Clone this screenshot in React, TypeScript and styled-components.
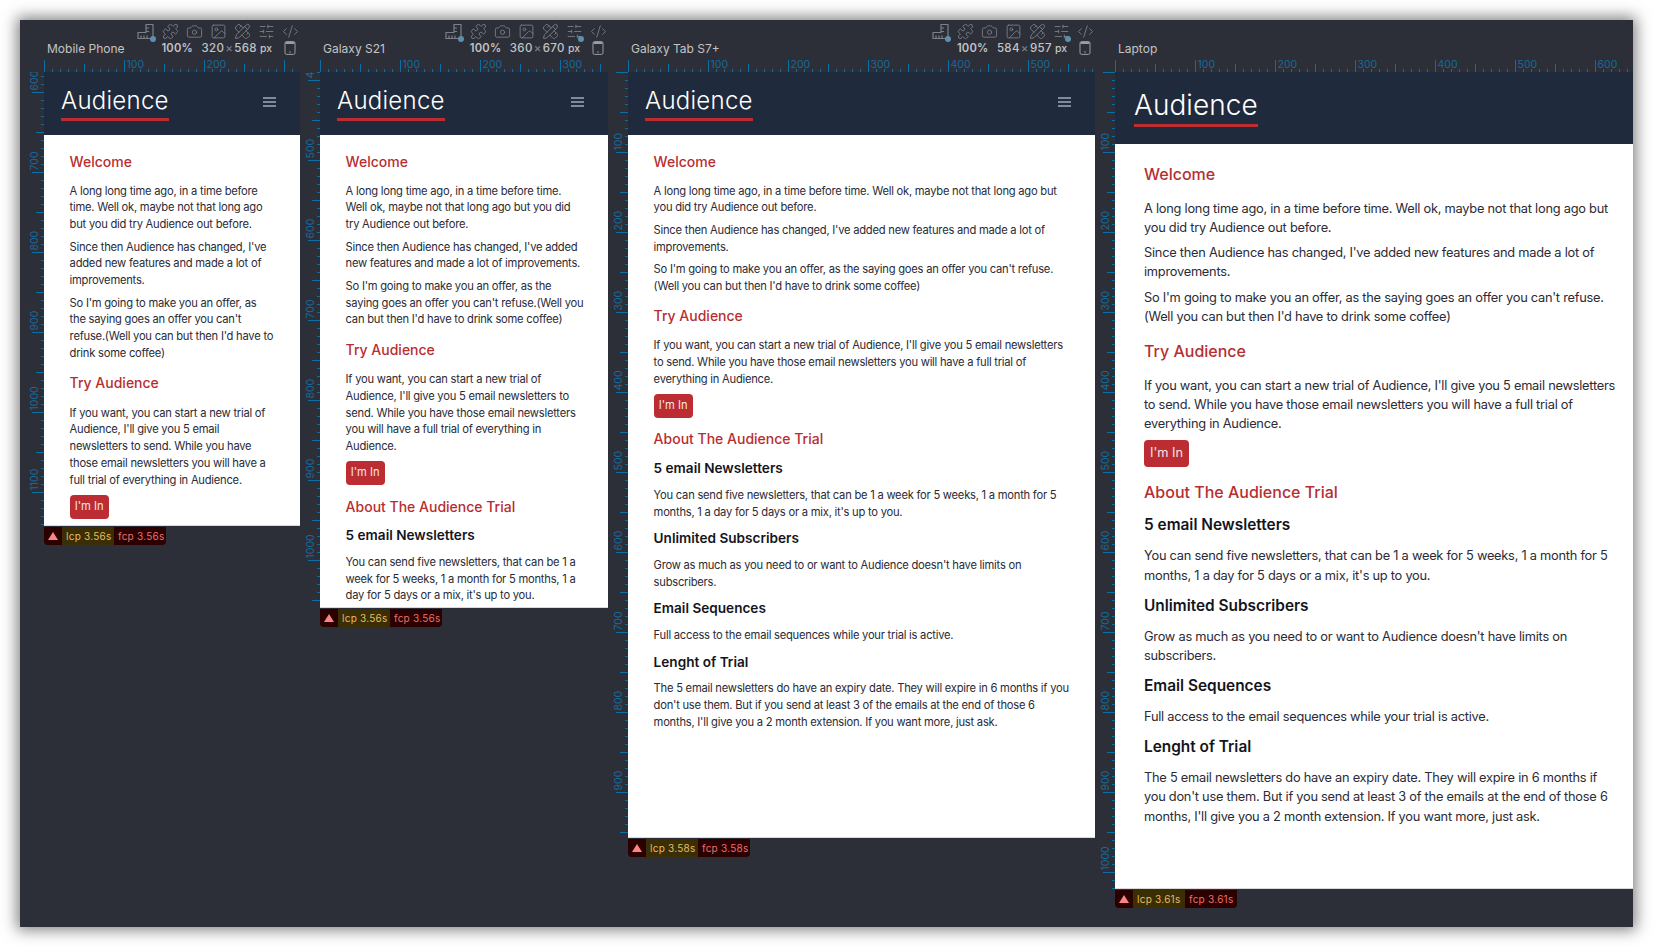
import React from "react";
import styled, { createGlobalStyle } from "styled-components";
import { Puzzle, Camera, Image as ImageIcon, PencilRuler, SlidersHorizontal, CodeXml } from "lucide-react";

const Global = createGlobalStyle`
  html, body { margin: 0; padding: 0; background: #fff; }
  body { font-family: Inter, "Liberation Sans", sans-serif; }
  * { box-sizing: border-box; }
`;

const Page = styled.div`
  padding: 20px;
  width: 1653px;
  height: 947px;
`;
const Win = styled.div`
  width: 1613px;
  height: 907px;
  background: #2c2f38;
  box-shadow: 0 0 14px 3px rgba(0, 0, 0, 0.5);
  display: flex;
  align-items: flex-start;
  overflow: hidden;
`;
const Device = styled.section<{ $gutter: number; $width?: number }>`
  display: grid;
  grid-template-columns: ${(p) => p.$gutter}px ${(p) => (p.$width ? `${p.$width}px` : "1fr")};
  grid-template-rows: 52px auto auto;
  flex: ${(p) => (p.$width ? "none" : "1 1 0")};
  min-width: 0;
`;
const Corner = styled.div``;
const Top = styled.header`
  display: flex;
  flex-direction: column;
  min-width: 0;
  overflow: hidden;
`;
const IconRow = styled.div`
  height: 20px;
  display: flex;
  justify-content: flex-end;
  align-items: center;
  gap: 4px;
  padding-top: 3px;
`;
const Slot = styled.span`
  position: relative;
  width: 20px;
  height: 18px;
  display: flex;
  align-items: center;
  justify-content: center;
  color: #7d8087;
`;
const Dot = styled.i`
  position: absolute;
  right: 0;
  bottom: -1px;
  width: 6px;
  height: 6px;
  border-radius: 50%;
  background: #5d90ad;
`;
const InfoRow = styled.div`
  height: 16px;
  display: flex;
  align-items: center;
  font-size: 12px;
  color: #c3c4c7;
`;
const Label = styled.span`
  margin-left: 3px;
  margin-right: auto;
  white-space: nowrap;
`;
const Zoom = styled.span`
  font-size: 11.2px;
  font-weight: 600;
  width: 40px;
  letter-spacing: 0.2px;
  white-space: nowrap;
`;
const Dims = styled.span`
  font-size: 11.5px;
  font-weight: 500;
  letter-spacing: 0.35px;
  white-space: nowrap;
`;
const Times = styled.span`
  color: #7c7f86;
  margin: 0 1px;
`;
const Px = styled.span`
  font-size: 10.5px;
  font-weight: 500;
  margin-left: 3px;
  margin-right: 12px;
`;
const PhoneSlot = styled.span`
  display: flex;
  margin-right: 4px;
  color: #9a9ca2;
`;
const RulerH = styled.svg`
  display: block;
  flex: none;
`;
const RulerV = styled.svg`
  display: block;
  justify-self: end;
`;
const Viewport = styled.div<{ $height: number }>`
  height: ${(p) => p.$height}px;
  background: #fff;
  overflow: hidden;
  border-bottom: 1px solid #d9d9d9;
`;
const SiteHeader = styled.div<{ $wide?: boolean }>`
  height: ${(p) => (p.$wide ? 72 : 63)}px;
  background: #1f2a3c;
  display: flex;
  align-items: center;
  justify-content: space-between;
  padding: 0 24px 0 ${(p) => (p.$wide ? 19 : 17)}px;
`;
const Logo = styled.div<{ $wide?: boolean }>`
  color: #fff;
  font-size: ${(p) => (p.$wide ? 28 : 24)}px;
  line-height: ${(p) => (p.$wide ? 32 : 28)}px;
  font-weight: 300;
  padding-bottom: 3px;
  border-bottom: 3px solid #bb2d2e;
  letter-spacing: ${(p) => (p.$wide ? 0.05 : 0.25)}px;
`;
const Burger = styled.div`
  width: 13px;
  height: 10px;
  margin-top: -3px;
  border-top: 2px solid #7f8b9c;
  border-bottom: 2px solid #7f8b9c;
  display: flex;
  align-items: center;
  &::before {
    content: "";
    display: block;
    width: 100%;
    height: 2px;
    background: #7f8b9c;
  }
`;
const Article = styled.div<{ $wide?: boolean }>`
  padding: ${(p) => (p.$wide ? "20px 20px 0 29px" : "17.5px 20px 0 25.6px")};
  color: #2a2b36;
  font-size: ${(p) => (p.$wide ? 12.8 : 11.2)}px;
  line-height: 1.5;
  letter-spacing: -0.24px;
`;
const H3 = styled.h3<{ $wide?: boolean }>`
  margin: ${(p) => (p.$wide ? "15px 0 14.5px" : "12.6px 0 13.2px")};
  color: #b72e30;
  font-size: ${(p) => (p.$wide ? 16 : 14)}px;
  line-height: ${(p) => (p.$wide ? 20 : 17)}px;
  font-weight: 500;
  letter-spacing: 0;
  &:first-child { margin-top: 0; }
`;
const H4 = styled.h4<{ $wide?: boolean }>`
  margin: ${(p) => (p.$wide ? "11px 0 12px" : "9.9px 0 9.6px")};
  color: #14151c;
  font-size: ${(p) => (p.$wide ? 15.4 : 13.6)}px;
  line-height: ${(p) => (p.$wide ? 19 : 17)}px;
  font-weight: 600;
  letter-spacing: 0;
  h3 + & { margin-top: ${(p) => (p.$wide ? -1 : -0.5)}px; }
`;
const P = styled.p<{ $wide?: boolean }>`
  margin: 0 0 ${(p) => (p.$wide ? 6.4 : 5.6)}px;
`;
const Line = styled.span`
  display: block;
  white-space: nowrap;
`;
const Btn = styled.button<{ $wide?: boolean }>`
  display: block;
  margin: 6px 0 0;
  padding: 0;
  width: ${(p) => (p.$wide ? 45 : 39)}px;
  height: ${(p) => (p.$wide ? 27 : 24)}px;
  border: 0;
  border-radius: 4px;
  background: #bb2d32;
  color: #f7e4e4;
  font: inherit;
  letter-spacing: 0;
  line-height: 1;
`;
const Status = styled.div`
  display: inline-flex;
  height: 18px;
  margin-top: 0.5px;
  font-size: 10px;
  line-height: 18px;
  letter-spacing: 0.25px;
  border-radius: 0 0 4px 4px;
  overflow: hidden;
  justify-self: start;
`;
const Warn = styled.span`
  width: 18px;
  background: #2a0000;
  display: flex;
  align-items: center;
  justify-content: center;
  color: #f98686;
`;
const Metric = styled.span<{ $ok?: boolean }>`
  padding: 0 4px;
  width: 52px;
  white-space: nowrap;
  background: ${(p) => (p.$ok ? "#3b2e05" : "#2a0000")};
  color: ${(p) => (p.$ok ? "#e5bd63" : "#ee6f6f")};
`;

const TICK = "#0b6fa6";
const TEXT = "#156a9b";
const STEP = 0.8;
const RULER_H = 16;

function HRuler({ width }: { width: number }) {
  const items: React.ReactNode[] = [];
  for (let v = 0; v * STEP <= width; v += 10) {
    const x = v * STEP + 0.5;
    const h = v % 100 === 0 ? 12 : v % 50 === 0 ? 8 : 3;
    items.push(<line key={v} x1={x} x2={x} y1={RULER_H - h} y2={RULER_H} stroke={TICK} />);
    if (v % 100 === 0 && v > 0 && x + 24 < width)
      items.push(
        <text key={`t${v}`} x={x + 2} y={12} fontSize={10.5} fill={TEXT} fontFamily="Inter, sans-serif">
          {v}
        </text>
      );
  }
  return (
    <RulerH width={width} height={RULER_H} viewBox={`0 0 ${width} ${RULER_H}`}>
      {items}
    </RulerH>
  );
}

function VRuler({ height, start, gutter }: { height: number; start: number; gutter: number }) {
  const items: React.ReactNode[] = [];
  for (let v = Math.ceil(start / 10) * 10; (v - start) * STEP <= height; v += 10) {
    const y = (v - start) * STEP + 0.5;
    const w = v % 100 === 0 ? 12 : v % 50 === 0 ? 8 : 3;
    items.push(<line key={v} x1={gutter - w} x2={gutter} y1={y} y2={y} stroke={TICK} />);
    if (v % 100 === 0 && v > 0)
      items.push(
        <text
          key={`t${v}`}
          transform={`translate(${gutter - 6} ${y - 2}) rotate(-90)`}
          fontSize={10.5}
          fill={TEXT}
          fontFamily="Inter, sans-serif"
        >
          {v}
        </text>
      );
  }
  return (
    <RulerV width={gutter} height={height} viewBox={`0 0 ${gutter} ${height}`}>
      {items}
    </RulerV>
  );
}

const RulerCornerIcon = () => (
  <svg width="19" height="17" viewBox="0 0 19 17" fill="none" stroke="currentColor" strokeWidth="1.2">
    <path d="M1 9.5h8V1.5h7v14H1z" strokeLinejoin="round" />
    <path d="M9 5h3M9 8.5h3M4 15.5v-3M7 15.5v-3M10 15.5v-3" />
  </svg>
);
const PhoneIcon = () => (
  <svg width="12" height="14" viewBox="0 0 12 14" fill="none">
    <rect x="1" y="0.6" width="10" height="12.8" rx="1.6" stroke="currentColor" />
    <path d="M1.5 1h9v2h-9z" fill="currentColor" />
    <circle cx="6" cy="11" r="0.8" fill="currentColor" />
  </svg>
);

const icon = { size: 17, strokeWidth: 1.25 };

function Icons({ sliderDot }: { sliderDot: boolean }) {
  return (
    <IconRow>
      <Slot><RulerCornerIcon /><Dot /></Slot>
      <Slot><Puzzle {...icon} /></Slot>
      <Slot><Camera {...icon} /></Slot>
      <Slot><ImageIcon {...icon} /></Slot>
      <Slot><PencilRuler {...icon} /></Slot>
      <Slot><SlidersHorizontal {...icon} />{sliderDot && <Dot />}</Slot>
      <Slot><CodeXml {...icon} /></Slot>
    </IconRow>
  );
}

type Block =
  | { t: "h3"; x: string }
  | { t: "h4"; x: string }
  | { t: "p"; x: string[] }
  | { t: "b" };

const h3 = (x: string): Block => ({ t: "h3", x });
const h4 = (x: string): Block => ({ t: "h4", x });
const p = (...x: string[]): Block => ({ t: "p", x });
const b: Block = { t: "b" };

const phone: Block[] = [
  h3("Welcome"),
  p("A long long time ago, in a time before", "time. Well ok, maybe not that long ago", "but you did try Audience out before."),
  p("Since then Audience has changed, I've", "added new features and made a lot of", "improvements."),
  p("So I'm going to make you an offer, as", "the saying goes an offer you can't", "refuse.(Well you can but then I'd have to", "drink some coffee)"),
  h3("Try Audience"),
  p("If you want, you can start a new trial of", "Audience, I'll give you 5 email", "newsletters to send. While you have", "those email newsletters you will have a", "full trial of everything in Audience."),
  b,
];
const galaxy: Block[] = [
  h3("Welcome"),
  p("A long long time ago, in a time before time.", "Well ok, maybe not that long ago but you did", "try Audience out before."),
  p("Since then Audience has changed, I've added", "new features and made a lot of improvements."),
  p("So I'm going to make you an offer, as the", "saying goes an offer you can't refuse.(Well you", "can but then I'd have to drink some coffee)"),
  h3("Try Audience"),
  p("If you want, you can start a new trial of", "Audience, I'll give you 5 email newsletters to", "send. While you have those email newsletters", "you will have a full trial of everything in", "Audience."),
  b,
  h3("About The Audience Trial"),
  h4("5 email Newsletters"),
  p("You can send five newsletters, that can be 1 a", "week for 5 weeks, 1 a month for 5 months, 1 a", "day for 5 days or a mix, it's up to you."),
];
const tablet: Block[] = [
  h3("Welcome"),
  p("A long long time ago, in a time before time. Well ok, maybe not that long ago but", "you did try Audience out before."),
  p("Since then Audience has changed, I've added new features and made a lot of", "improvements."),
  p("So I'm going to make you an offer, as the saying goes an offer you can't refuse.", "(Well you can but then I'd have to drink some coffee)"),
  h3("Try Audience"),
  p("If you want, you can start a new trial of Audience, I'll give you 5 email newsletters", "to send. While you have those email newsletters you will have a full trial of", "everything in Audience."),
  b,
  h3("About The Audience Trial"),
  h4("5 email Newsletters"),
  p("You can send five newsletters, that can be 1 a week for 5 weeks, 1 a month for 5", "months, 1 a day for 5 days or a mix, it's up to you."),
  h4("Unlimited Subscribers"),
  p("Grow as much as you need to or want to Audience doesn't have limits on", "subscribers."),
  h4("Email Sequences"),
  p("Full access to the email sequences while your trial is active."),
  h4("Lenght of Trial"),
  p("The 5 email newsletters do have an expiry date. They will expire in 6 months if you", "don't use them. But if you send at least 3 of the emails at the end of those 6", "months, I'll give you a 2 month extension. If you want more, just ask."),
];
const laptop: Block[] = [
  ...tablet.slice(0, 15),
  p("The 5 email newsletters do have an expiry date. They will expire in 6 months if", "you don't use them. But if you send at least 3 of the emails at the end of those 6", "months, I'll give you a 2 month extension. If you want more, just ask."),
];

function Content({ blocks, wide }: { blocks: Block[]; wide?: boolean }) {
  return (
    <Article $wide={wide}>
      {blocks.map((k, i) => {
        if (k.t === "h3") return <H3 key={i} $wide={wide}>{k.x}</H3>;
        if (k.t === "h4") return <H4 key={i} $wide={wide}>{k.x}</H4>;
        if (k.t === "b") return <Btn key={i} $wide={wide}>I'm In</Btn>;
        return (
          <P key={i} $wide={wide}>
            {k.x.map((l, j) => <Line key={j}>{l}</Line>)}
          </P>
        );
      })}
    </Article>
  );
}

type DeviceProps = {
  name: string;
  gutter: number;
  width?: number;
  rulerWidth: number;
  height: number;
  start: number;
  size?: [number, number];
  sliderDot?: boolean;
  blocks: Block[];
  wide?: boolean;
  lcp: string;
};

function DeviceFrame(d: DeviceProps) {
  return (
    <Device $gutter={d.gutter} $width={d.width}>
      <Corner />
      <Top>
        {d.size ? <Icons sliderDot={!!d.sliderDot} /> : <IconRow />}
        <InfoRow>
          <Label>{d.name}</Label>
          {d.size && (
            <>
              <Zoom>100%</Zoom>
              <Dims>{d.size[0]}<Times>×</Times>{d.size[1]}</Dims>
              <Px>px</Px>
              <PhoneSlot><PhoneIcon /></PhoneSlot>
            </>
          )}
        </InfoRow>
        <HRuler width={d.rulerWidth} />
      </Top>
      <VRuler height={d.height} start={d.start} gutter={d.gutter} />
      <Viewport $height={d.height}>
        <SiteHeader $wide={d.wide}>
          <Logo $wide={d.wide}>Audience</Logo>
          {!d.wide && <Burger />}
        </SiteHeader>
        <Content blocks={d.blocks} wide={d.wide} />
      </Viewport>
      <Corner />
      <Status>
        <Warn>
          <svg width="10" height="8" viewBox="0 0 10 8"><path d="M5 0l5 8H0z" fill="currentColor" /></svg>
        </Warn>
        <Metric $ok>lcp {d.lcp}</Metric>
        <Metric>fcp {d.lcp}</Metric>
      </Status>
    </Device>
  );
}

export default function App() {
  return (
    <Page>
      <Global />
      <Win>
        <DeviceFrame name="Mobile Phone" gutter={24} width={256} rulerWidth={256} height={454} start={575} size={[320, 568]} blocks={phone} lcp="3.56s" />
        <DeviceFrame name="Galaxy S21" gutter={20} width={288} rulerWidth={288} height={536} start={390} size={[360, 670]} sliderDot blocks={galaxy} lcp="3.56s" />
        <DeviceFrame name="Galaxy Tab S7+" gutter={20} width={467} rulerWidth={467} height={766} start={0} size={[584, 957]} sliderDot blocks={tablet} lcp="3.58s" />
        <DeviceFrame name="Laptop" gutter={20} rulerWidth={518} height={817} start={0} blocks={laptop} wide lcp="3.61s" />
      </Win>
    </Page>
  );
}
